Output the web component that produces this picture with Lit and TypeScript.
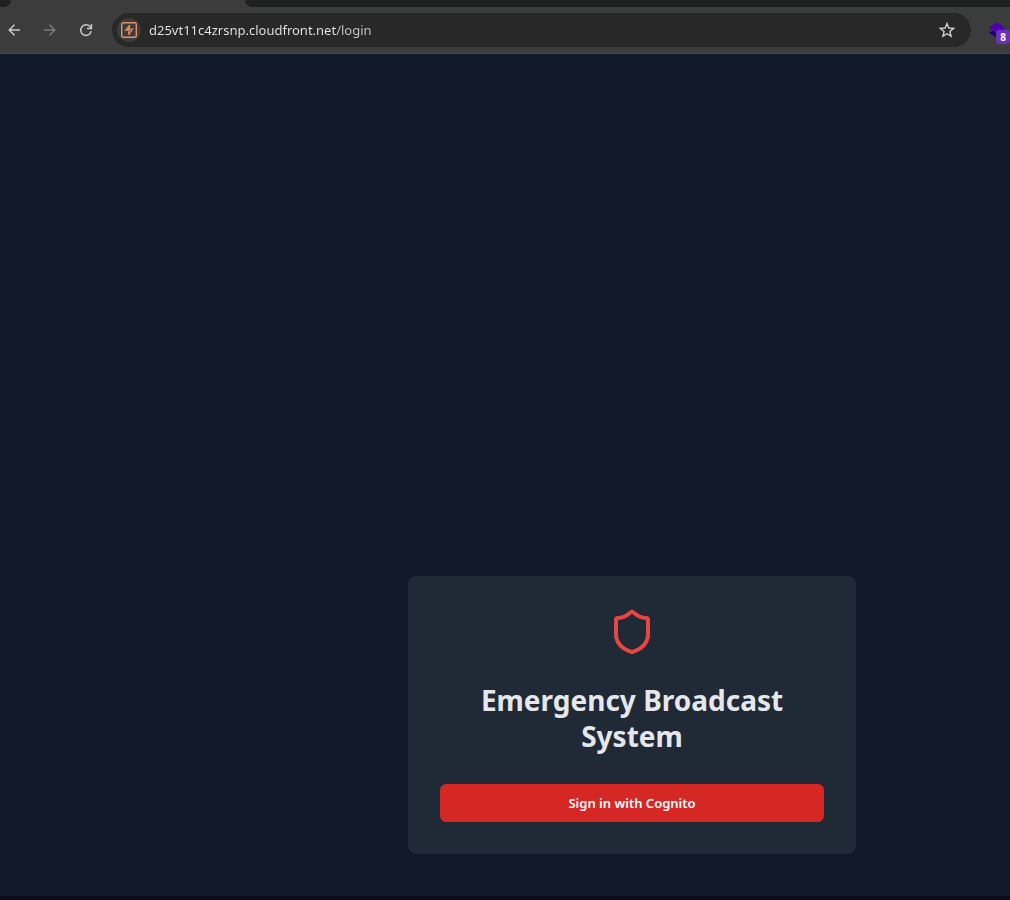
import { LitElement, html, css } from "lit";
import { customElement, property } from "lit/decorators.js";

@customElement("browser-bar")
class BrowserBar extends LitElement {
  @property() url = "";

  static styles = css`
    :host {
      display: block;
      background: #3c3c3c;
      border-bottom: 1px solid #46474c;
      font-family: "Segoe UI", "Noto Sans", "Open Sans", sans-serif;
    }
    * {
      box-sizing: border-box;
    }
    .tabs {
      display: grid;
      grid-template-columns: 11px 234px 1fr;
      height: 7px;
    }
    .strip {
      background: #1f2020;
    }
    .before {
      border-bottom-right-radius: 8px;
    }
    .after {
      border-bottom-left-radius: 8px;
    }
    .toolbar {
      display: flex;
      align-items: center;
      height: 46px;
      overflow: hidden;
    }
    .nav {
      display: flex;
      gap: 8px;
      flex: none;
      width: 112px;
    }
    button {
      display: grid;
      place-items: center;
      flex: none;
      width: 28px;
      height: 28px;
      padding: 0;
      border: 0;
      border-radius: 50%;
      background: none;
      color: #c9c9c9;
    }
    button:disabled {
      color: #7c7c7c;
    }
    .address {
      display: flex;
      align-items: center;
      flex: 1;
      min-width: 0;
      height: 34px;
      padding: 0 10px 0 5px;
      border-radius: 17px;
      background: #282828;
    }
    .site {
      width: 24px;
      height: 24px;
      background: #3c3c3c;
    }
    input {
      flex: 1;
      min-width: 0;
      height: 24px;
      margin-left: 8px;
      padding: 0;
      border: 0;
      outline: 0;
      font: 13px/24px "Segoe UI", "Noto Sans", "Open Sans", sans-serif;
      color: transparent;
      caret-color: #e6e6e6;
      background: linear-gradient(90deg, #e8e8e8 187px, #c8c8c8 187px);
      -webkit-background-clip: text;
      background-clip: text;
    }
    .extension {
      position: relative;
      width: 24px;
      height: 28px;
      margin-left: 15px;
      border-radius: 0;
    }
    .badge {
      position: absolute;
      right: 0;
      bottom: 0;
      width: 14px;
      height: 14px;
      border-radius: 3px;
      background: #6b2fbe;
      color: #fff;
      font: bold 10px/14px "Noto Sans", sans-serif;
      text-align: center;
    }
    svg {
      display: block;
    }
  `;

  render() {
    return html`
      <div class="tabs">
        <div class="strip before"></div>
        <div></div>
        <div class="strip after"></div>
      </div>
      <div class="toolbar">
        <div class="nav">
          <button aria-label="Back">
            <svg width="14" height="14" viewBox="0 0 14 14" fill="none" stroke="currentColor" stroke-width="1.5">
              <path d="M13 7H2.5M7.5 1.8 2.2 7l5.3 5.2" />
            </svg>
          </button>
          <button aria-label="Forward" disabled>
            <svg width="14" height="14" viewBox="0 0 14 14" fill="none" stroke="currentColor" stroke-width="1.5">
              <path d="M1 7h10.5M6.5 1.8 11.8 7l-5.3 5.2" />
            </svg>
          </button>
          <button aria-label="Reload">
            <svg width="14" height="14" viewBox="0 0 14 14" fill="none" stroke="currentColor" stroke-width="1.5">
              <path d="M12.2 8.2A5.3 5.3 0 1 1 11.4 4.2L12 5" />
              <path d="M12.4 1v4.6H8" />
            </svg>
          </button>
        </div>
        <div class="address">
          <button class="site" aria-label="Site information">
            <svg width="16" height="16" viewBox="0 0 16 16" fill="none" stroke="#e98f63">
              <rect x="0.7" y="0.7" width="14.6" height="14.6" rx="1.5" stroke-width="1.4" />
              <path d="M8.6 3.2 4.6 8.2H8L7.6 12.6" stroke-width="1.2" />
              <path d="M8.4 3.4V7.2H11.4L7.8 12.4" stroke-width="1.2" />
              <path d="M8.2 4.2V7.6L5.6 8Z" fill="#e98f63" stroke="none" />
            </svg>
          </button>
          <input aria-label="Address" .value=${this.url} spellcheck="false" />
          <button aria-label="Bookmark this page">
            <svg width="16" height="16" viewBox="0 0 16 16" fill="none" stroke="#cfcfcf" stroke-width="1.4">
              <path d="M8 1.6 9.8 6l4.8.4-3.7 3.1 1.2 4.7L8 11.7l-4.1 2.5 1.2-4.7L1.4 6.4 6.2 6Z" />
            </svg>
          </button>
        </div>
        <button class="extension" aria-label="Extension">
          <svg width="22" height="22" viewBox="0 0 22 22">
            <path d="M2 14 10 9l8 5-8 5Z" fill="#260070" />
            <path d="M2 9 10 3l8 6-8 6Z" fill="#4a00b4" />
          </svg>
          <span class="badge">8</span>
        </button>
      </div>
    `;
  }
}

@customElement("login-card")
class LoginCard extends LitElement {
  static styles = css`
    :host {
      display: block;
      box-sizing: border-box;
      width: 100%;
      max-width: 448px;
      padding: 32px;
      border-radius: 8px;
      background: #202936;
      font-family: "Segoe UI", "Noto Sans", "Open Sans", sans-serif;
    }
    svg {
      display: block;
      margin: 0 auto;
    }
    h1 {
      margin: 26px 0 30px;
      font-size: 28px;
      line-height: 36px;
      font-weight: 700;
      text-align: center;
      color: #e5e7eb;
    }
    button {
      display: block;
      width: 100%;
      height: 38px;
      padding: 0;
      border: 0;
      border-radius: 6px;
      background: #d52724;
      color: #fff;
      font: 600 13px/20px "Segoe UI", "Noto Sans", "Open Sans", sans-serif;
    }
  `;

  render() {
    return html`
      <svg width="48" height="48" viewBox="0 0 24 24" fill="none" stroke="#e84543" stroke-width="2" stroke-linecap="round" stroke-linejoin="round">
        <path d="M20 13c0 5-3.5 7.5-7.66 8.95a1 1 0 0 1-.67-.01C7.5 20.5 4 18 4 13V6a1 1 0 0 1 1-1c2 0 4.5-1.2 6.24-2.72a1.17 1.17 0 0 1 1.52 0C14.51 3.81 17 5 19 5a1 1 0 0 1 1 1z" />
      </svg>
      <h1>Emergency Broadcast System</h1>
      <button type="button">Sign in with Cognito</button>
    `;
  }
}

@customElement("app-root")
class AppRoot extends LitElement {
  static styles = css`
    :host {
      display: flex;
      flex-direction: column;
      box-sizing: border-box;
      min-height: 100vh;
      background: #111827;
      border-bottom: 4px solid #0b0b1b;
    }
    main {
      display: flex;
      flex: 1;
      align-items: flex-end;
      justify-content: center;
      padding: 42px 0 42px 254px;
    }
  `;

  render() {
    return html`
      <browser-bar url="d25vt11c4zrsnp.cloudfront.net/login"></browser-bar>
      <main><login-card></login-card></main>
    `;
  }
}
